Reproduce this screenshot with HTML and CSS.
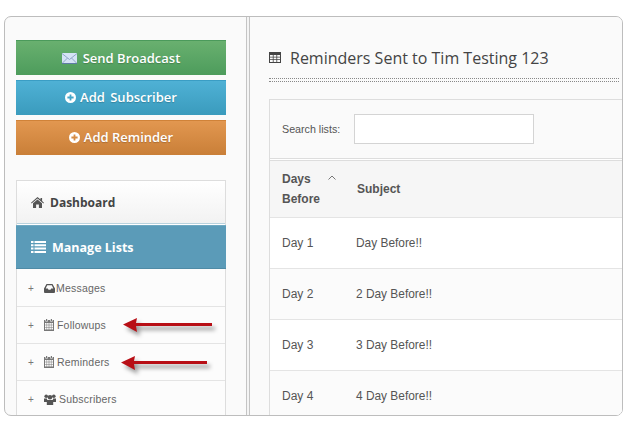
FILE: index.html
```html
<!DOCTYPE html>
<html lang="en">
<head>
    <meta charset="UTF-8">
    <title>Reminders Sent</title>
    <link rel="stylesheet" href="styles.css">
</head>
<body>
    <div class="frame">
        <div class="sidebar">
            <a class="btn btn-green">
                <svg class="mail" width="15" height="11" viewBox="0 0 15 11"><rect x="0" y="0" width="15" height="11" fill="#d5e3f5"/><path d="M0 .5 7.5 6.5 15 .5M0 10.5 5.5 5M15 10.5 9.5 5" fill="none" stroke="#8fa6c6" stroke-width="1"/><path d="M0 10.5H15" stroke="#5f7ca5" stroke-width="1"/></svg>
                Send Broadcast
            </a>
            <a class="btn btn-blue">
                <svg class="plus" width="11" height="11" viewBox="0 0 11 11"><path fill="#fff" fill-rule="evenodd" d="M5.5 0a5.5 5.5 0 1 0 0 11 5.5 5.5 0 0 0 0-11ZM4.6 2.4h1.8v2.2h2.2v1.8H6.4v2.2H4.6V6.4H2.4V4.6h2.2Z"/></svg>
                Add Subscriber
            </a>
            <a class="btn btn-orange">
                <svg class="plus" width="11" height="11" viewBox="0 0 11 11"><path fill="#fff" fill-rule="evenodd" d="M5.5 0a5.5 5.5 0 1 0 0 11 5.5 5.5 0 0 0 0-11ZM4.6 2.4h1.8v2.2h2.2v1.8H6.4v2.2H4.6V6.4H2.4V4.6h2.2Z"/></svg>
                Add Reminder
            </a>

            <div class="nav">
                <div class="nav-top">
                    <svg width="13" height="11" viewBox="0 0 13 11"><path fill="#555" d="M6.5 0 9.5 2.6V1h1.6v3l1.9 1.7-.6.7-5.9-5-5.900 5-.6-.7ZM6.500 2.400 11 6.200V11H7.900V7.500H5.100V11H2V6.200Z"/></svg>
                    Dashboard
                </div>
                <div class="nav-active">
                    <svg width="15" height="12" viewBox="0 0 15 12"><path fill="#fff" d="M0 0h2.500v2H0Zm3.500 0H15v2H3.500ZM0 3.300h2.500v2H0Zm3.500 0H15v2H3.500ZM0 6.600h2.500v2H0Zm3.500 0H15v2H3.500ZM0 9.900h2.500v2H0Zm3.500 0H15v2H3.500Z"/></svg>
                    Manage Lists
                </div>
                <div class="nav-item nav-item-first">
                    <span class="expand">+</span>
                    <svg class="ico ico-inbox" width="11" height="9" viewBox="0 0 11 9"><path fill="#555" fill-rule="evenodd" d="M2.500 0h6L11 4.500V8a1 1 0 0 1-1 1H1a1 1 0 0 1-1-1V4.500ZM3.200 1.200 1.700 4.500h2.100l.7 1.300h2l.7-1.300h2.100L7.800 1.200Z"/></svg>
                    Messages
                </div>
                <div class="nav-item">
                    <span class="expand">+</span>
                    <svg class="ico" width="10" height="12" viewBox="0 0 10 12"><path fill="#777" fill-rule="evenodd" d="M2 0h1.200v2H2Zm4.800 0H8v2H6.800ZM0 1h1.400v1.600h2.400V1h2.400v1.600h2.400V1H10v11H0ZM1 4v1.700h1.600V4Zm2.100 0v1.700h1.600V4Zm2.200 0v1.700h1.600V4Zm2.100 0v1.700H9V4ZM1 6.300V8h1.600V6.300Zm2.100 0V8h1.600V6.300Zm2.200 0V8h1.600V6.300Zm2.100 0V8H9V6.300ZM1 8.600v1.800h1.600V8.600Zm2.100 0v1.800h1.600V8.600Zm2.200 0v1.800h1.600V8.600Zm2.100 0v1.800H9V8.600Z"/></svg>
                    Followups
                </div>
                <div class="nav-item">
                    <span class="expand">+</span>
                    <svg class="ico" width="10" height="12" viewBox="0 0 10 12"><path fill="#777" fill-rule="evenodd" d="M2 0h1.200v2H2Zm4.800 0H8v2H6.800ZM0 1h1.400v1.600h2.400V1h2.400v1.600h2.400V1H10v11H0ZM1 4v1.700h1.600V4Zm2.100 0v1.700h1.600V4Zm2.200 0v1.700h1.600V4Zm2.100 0v1.700H9V4ZM1 6.300V8h1.600V6.300Zm2.100 0V8h1.600V6.300Zm2.200 0V8h1.600V6.300Zm2.100 0V8H9V6.300ZM1 8.600v1.800h1.600V8.600Zm2.100 0v1.800h1.600V8.600Zm2.200 0v1.800h1.600V8.600Zm2.100 0v1.800H9V8.600Z"/></svg>
                    Reminders
                </div>
                <div class="nav-item">
                    <span class="expand">+</span>
                    <svg class="ico" width="12" height="11" viewBox="0 0 12 11"><g fill="#555"><circle cx="2.200" cy="2.200" r="1.800"/><circle cx="9.800" cy="2.200" r="1.800"/><circle cx="6" cy="3.200" r="2.300"/><path d="M0 4.500h3l.5 3.500H0ZM9 4.500h3V8H8.500ZM2.800 6h6.400v5H2.800Z"/></g></svg>
                    Subscribers
                </div>
            </div>

            <svg class="arrow arrow-one" width="100" height="26" viewBox="0 0 100 26"><path d="M5 12.500 19 6 18 11H94V14H18L19 20Z" fill="#b80f16"/></svg>
            <svg class="arrow arrow-two" width="100" height="26" viewBox="0 0 100 26"><path d="M5 12.500 19 6 18 11H91V14H18L19 20Z" fill="#b80f16"/></svg>
        </div>

        <div class="divider"></div>

        <div class="main">
            <div class="page-head">
                <svg width="12" height="11" viewBox="0 0 12 11"><path fill="#444" fill-rule="evenodd" d="M0 0h12v11H0ZM1 3v1.700h2.800V3Zm3.600 0v1.700h2.800V3Zm3.600 0v1.700H11V3ZM1 5.500v1.700h2.800V5.500Zm3.600 0v1.700h2.800V5.500Zm3.600 0v1.700H11V5.500ZM1 8v2h2.800V8Zm3.600 0v2h2.800V8Zm3.600 0v2H11V8Z"/></svg>
                <h1>Reminders Sent to Tim Testing 123</h1>
            </div>
            <div class="dots"></div>

            <div class="box">
                <div class="search">
                    <label for="q">Search lists:</label>
                    <input id="q" type="text">
                </div>
                <table>
                    <thead>
                        <tr>
                            <th class="col-days">
                                <div class="days-cell">
                                    <span>Days<br>Before</span>
                                    <svg class="sort" width="8" height="5" viewBox="0 0 8 5"><path d="M.5 4.500 4 1l3.500 3.500" fill="none" stroke="#777" stroke-width="1"/></svg>
                                </div>
                            </th>
                            <th class="col-subject">Subject</th>
                        </tr>
                    </thead>
                    <tbody>
                        <tr><td>Day 1</td><td>Day Before!!</td></tr>
                        <tr class="odd"><td>Day 2</td><td>2 Day Before!!</td></tr>
                        <tr><td>Day 3</td><td>3 Day Before!!</td></tr>
                        <tr class="odd"><td>Day 4</td><td>4 Day Before!!</td></tr>
                    </tbody>
                </table>
            </div>
        </div>
    </div>
</body>
</html>
```

FILE: styles.css
```css
* {
    box-sizing: border-box;
}
html, body {
    margin: 0;
    height: 100%;
    background-color: #fff;
}
body {
    padding: 16px 6px 0 4px;
    font-family: "Liberation Sans", Arial, sans-serif;
    color: #555;
}
.frame {
    display: flex;
    height: 400px;
    border: 1px solid #bdbdbd;
    border-radius: 7px;
    background-color: #fafafa;
    overflow: hidden;
}

/* left column */
.sidebar {
    position: relative;
    width: 241px;
    flex: none;
    padding: 23px 0 0 11px;
}
.btn {
    display: flex;
    align-items: center;
    justify-content: center;
    gap: 6px;
    width: 210px;
    height: 35px;
    margin-bottom: 5px;
    color: #fff;
    font-family: "Open Sans", sans-serif;
    font-size: 13px;
    font-weight: 600;
    text-shadow: 0 1px 1px rgba(0, 0, 0, 0.2);
}
.btn .plus {
    margin-right: -2px;
}
.btn-green {
    background: linear-gradient(#69b06f, #4d9c5c);
    border-top: 1px solid #4b9a5b;
}
.btn-blue {
    background: linear-gradient(#4fb1d5, #3a9bbd);
    border-top: 1px solid #3a9dc4;
    word-spacing: 2px;
    padding-bottom: 2px;
}
.btn-orange {
    background: linear-gradient(#e29750, #c97f38);
    border-top: 1px solid #d08238;
    padding-bottom: 2px;
}
.nav {
    width: 210px;
    margin-top: 25px;
    border-left: 1px solid #ddd;
    border-right: 1px solid #ddd;
    background-color: #fff;
}
.nav-top, .nav-active {
    display: flex;
    align-items: center;
    gap: 6px;
    height: 44px;
    padding-left: 14px;
    font-family: "Open Sans", sans-serif;
    font-size: 12px;
    font-weight: 700;
}
.nav-top {
    margin-bottom: 1px;
    border-top: 1px solid #ddd;
    border-bottom: 1px solid #b9d3de;
    background: linear-gradient(#fff, #f2f2f2);
    color: #444;
}
.nav-active {
    margin: 0 -1px;
    background-color: #5b9bb8;
    border-top: 1px solid #6fa9c2;
    border-bottom: 1px solid #4f8ba6;
    color: #fff;
    padding-left: 15px;
    font-size: 12.500px;
}
.nav-item {
    display: flex;
    align-items: center;
    height: 37px;
    padding-left: 11px;
    border-bottom: 1px solid #e4e4e4;
    background-color: #fcfcfc;
    color: #666;
    font-size: 10.500px;
    letter-spacing: 0.2px;
}
.nav-item-first {
    height: 38px;
    padding-top: 1px;
}
.expand {
    width: 16px;
    font-size: 10px;
    color: #777;
}
.ico {
    margin-right: 3px;
}
.ico-inbox {
    margin-right: 1px;
}
.arrow {
    position: absolute;
    filter: drop-shadow(3px 4px 2px rgba(0, 0, 0, 0.4));
}
.arrow-one {
    left: 113px;
    top: 295px;
}
.arrow-two {
    left: 111px;
    top: 333px;
}
.divider {
    width: 4px;
    flex: none;
    border-left: 1px solid #c4c4c4;
    border-right: 1px solid #c4c4c4;
    background-color: #f4f4f4;
}

/* right column */
.main {
    flex: 1;
    min-width: 0;
    padding: 0 0 0 19px;
    background-color: #fafafa;
}
.page-head {
    display: flex;
    align-items: center;
    gap: 9px;
    height: 30px;
    margin-top: 26px;
}
.page-head svg {
    margin-bottom: 2px;
}
h1 {
    margin: 0;
    font-family: "Open Sans", sans-serif;
    font-size: 16px;
    font-weight: 400;
    color: #444;
}
.dots {
    height: 4px;
    margin: 5px 3px 0 0;
    border-top: 1px dotted #888;
    border-bottom: 1px dotted #888;
}
.box {
    margin-top: 17px;
    border-top: 1px solid #ddd;
    border-left: 1px solid #ddd;
    background-color: #fff;
}
.search {
    display: flex;
    align-items: center;
    height: 59px;
    padding-left: 12px;
    background-color: #fafafa;
    border-bottom: 1px solid #ddd;
    font-size: 10.700px;
}
.search label {
    width: 72px;
}
.search input {
    width: 180px;
    height: 30px;
    border: 1px solid #d4d4d4;
    background-color: #fff;
}
table {
    width: 100%;
    border-collapse: collapse;
    border-top: 1px solid #ddd;
    margin-top: 1px;
    font-size: 12px;
}
th {
    height: 57px;
    text-align: left;
    padding: 0;
    background-color: #f6f6f6;
    border-bottom: 1px solid #e4e4e4;
    color: #555;
    line-height: 20px;
}
th.col-days {
    width: 86px;
    padding-left: 12px;
}
th.col-subject {
    padding-left: 1px;
}
.days-cell {
    display: flex;
    gap: 8px;
}
.sort {
    margin-top: 6px;
}
td {
    height: 51px;
    padding: 0;
    border-bottom: 1px solid #e4e4e4;
    font-size: 11.900px;
}
td:first-child {
    padding-left: 12px;
    font-size: 12px;
}
.odd td {
    background-color: #fbfbfb;
}
```
